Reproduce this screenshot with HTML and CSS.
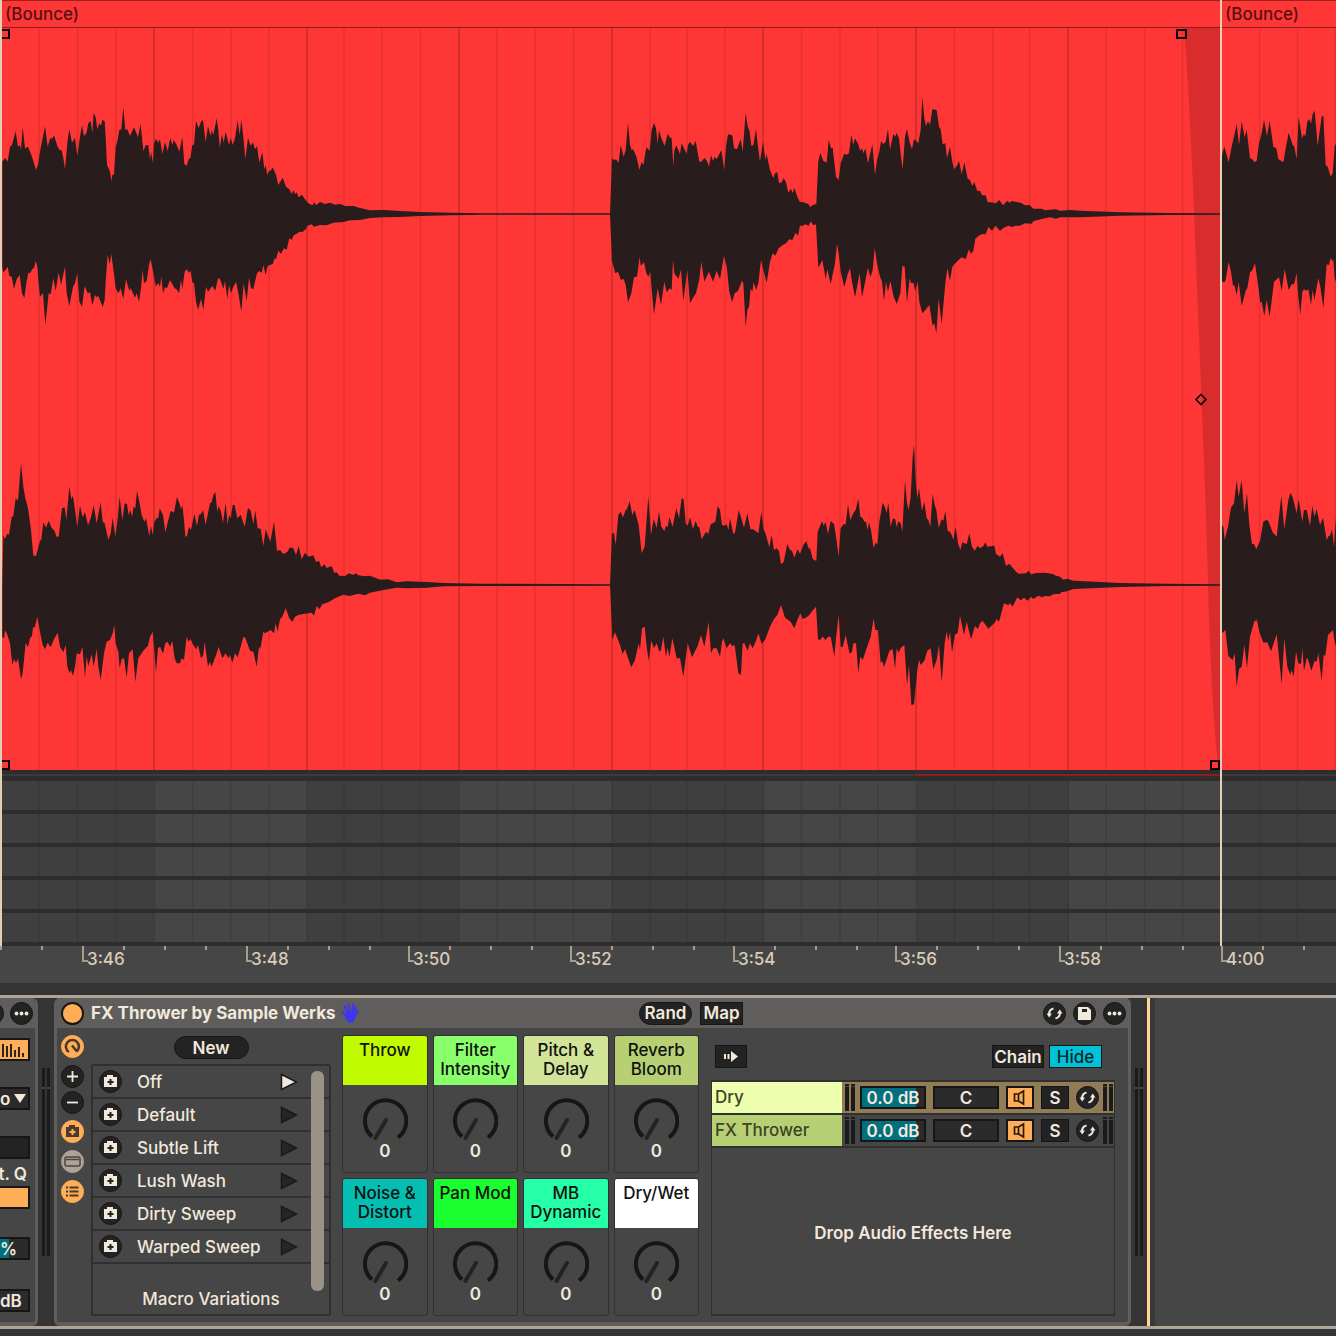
FILE: index.html
```html
<!DOCTYPE html>
<html lang="en">
<head>
<meta charset="utf-8">
<meta name="viewport" content="width=device-width, initial-scale=1">
<title>Arrangement – FX Thrower</title>
<link rel="stylesheet" href="styles.css">
</head>
<body>
<svg class="defs" width="0" height="0" aria-hidden="true">
  <defs>
    <symbol id="i-camera" viewBox="0 0 23 23"><path fill="currentColor" d="M5 7h3V5h6v2h4v10H5z"/><path class="cut" d="M11.500 9v6M8.500 12h6" stroke-width="2"/></symbol>
    <symbol id="i-swap" viewBox="0 0 23 23"><g fill="none" stroke="currentColor" stroke-width="2"><path d="M10.500 6.500Q6 7.500 6 12.500M12.500 16.500Q17 15.500 17 10.500"/></g><path fill="currentColor" d="M3.500 11.500h5.500l-2.800 4zM14 11.500h5.500l-2.800-4z"/></symbol>
    <symbol id="i-dots" viewBox="0 0 23 23"><g fill="currentColor"><circle cx="6.500" cy="11.500" r="1.900"/><circle cx="11.500" cy="11.500" r="1.900"/><circle cx="16.500" cy="11.500" r="1.900"/></g></symbol>
    <symbol id="i-play" viewBox="0 0 18 18"><path d="M1.500 1.500L16.500 9L1.500 16.500z" stroke="#191919" stroke-width="1.500" fill="currentColor"/></symbol>
    <symbol id="i-speaker" viewBox="0 0 24 19"><path d="M6.500 6h4v7h-4zM10.500 6l5-3v13l-5-3" fill="none" stroke="#2a1a08" stroke-width="1.700"/></symbol>
    <symbol id="i-knob" viewBox="0 0 46 44"><path d="M10 39.500A20.700 20.700 0 1 1 36 40.500" fill="none" stroke="#161616" stroke-width="4"/><path d="M24 23L13.500 41" stroke="#232323" stroke-width="4" stroke-linecap="round"/></symbol>
  </defs>
</svg>

<main class="arrangement">
  <header class="clip-heads">
    <span class="clip-head">(Bounce)</span>
    <span class="clip-head">(Bounce)</span>
  </header>
  <svg class="lane" viewBox="0 0 1336 742" preserveAspectRatio="none" role="img" aria-label="Audio waveform">
    <path class="grid-line" d="M39 0V742M77.500 0V742M116 0V742M192.500 0V742M231 0V742M269 0V742M344 0V742M382 0V742M420.500 0V742M497 0V742M535 0V742M573.500 0V742M650 0V742M687 0V742M725 0V742M801.500 0V742M840 0V742M878 0V742M954.500 0V742M993 0V742M1029.500 0V742M1106 0V742M1144.500 0V742M1182.500 0V742M1259.500 0V742M1297.500 0V742M1335 0V742"/>
    <path class="bar-line" d="M154 0V742M307 0V742M459 0V742M612 0V742M763 0V742M916 0V742M1068 0V742"/>
    <path fill="rgba(0,0,0,.15)" d="M1184 0Q1189 60 1194 185T1203 410T1208 557T1212 660T1219 742H1221V0z"/>
    <g class="wave">
      <svg x="0" y="52" width="640" height="330" viewBox="0 0 1920 990"><path d="M7,402 7,245 16,234 23,245 30,200 36,195 47,154 54,200 60,195 63,210 68,141 75,205 84,200 92,220 100,243 108,270 114,255 120,215 135,139 143,200 151,174 157,176 162,166 172,198 179,211 185,210 190,235 195,268 203,180 208,148 216,188 225,174 232,228 240,170 246,136 252,168 259,160 265,130 272,123 277,160 281,98 287,112 292,148 298,130 303,137 307,119 314,124 317,170 321,255 330,275 334,303 338,283 342,285 347,200 352,185 358,150 364,148 370,82 376,150 382,148 390,168 402,142 414,172 422,132 430,213 437,196 445,195 450,240 453,215 459,250 462,190 468,176 474,188 480,178 487,222 495,186 503,213 511,174 517,195 521,180 530,195 538,215 547,170 553,253 560,257 566,238 571,234 577,195 582,194 588,122 596,145 603,125 609,120 617,187 624,138 632,168 635,150 640,165 650,115 655,150 659,203 666,163 671,188 677,155 687,195 692,174 698,195 705,175 713,121 719,165 724,119 730,170 736,238 744,174 752,197 759,187 765,208 771,198 778,248 787,216 793,268 797,256 802,285 807,273 812,272 818,262 828,284 835,315 848,293 858,320 868,328 875,342 880,330 885,343 890,337 896,352 906,344 915,358 925,370 937,376 943,367 948,376 960,366 975,372 990,368 1005,374 1020,372 1035,378 1060,378 1080,384 1110,391 1150,390 1200,393 1260,396 1350,398 1450,400 1830,400 1830,404 1450,404 1350,406 1260,408 1200,411 1150,412 1110,414 1080,420 1050,421 1030,426 1000,428 980,436 960,435 942,440 935,433 922,437 918,446 908,456 900,455 888,462 880,467 876,479 868,475 860,509 852,505 843,522 835,512 828,538 824,535 818,553 808,555 802,560 797,585 790,555 785,578 778,573 771,580 760,627 753,625 747,593 740,663 731,610 724,695 715,640 708,605 700,620 693,640 687,615 682,657 675,603 670,627 660,597 654,595 646,632 637,618 624,635 618,620 610,690 603,657 594,690 588,665 582,610 577,607 572,572 567,578 560,568 554,575 547,627 543,600 537,640 530,628 524,625 510,600 501,625 495,622 489,640 484,590 480,620 474,608 468,620 462,590 452,537 447,555 440,603 432,610 428,570 423,625 417,665 410,640 405,653 392,625 388,632 378,598 370,657 362,625 355,640 347,625 343,590 334,522 329,553 323,525 318,590 314,660 308,681 295,648 290,652 285,645 277,676 270,637 263,640 254,618 246,680 238,665 232,580 225,610 219,620 208,678 200,640 195,560 183,615 176,577 167,633 160,595 152,643 146,640 136,735 129,640 120,650 115,600 112,560 107,542 103,562 97,568 90,580 85,578 79,610 73,654 66,640 59,585 50,598 42,627 35,590 28,588 23,560 10,578 7,560Z"/></svg>
      <svg x="600" y="52" width="640" height="330" viewBox="0 0 1920 990"><path d="M30,402 36,235 42,240 48,238 56,248 62,195 71,230 77,210 84,128 90,195 95,210 99,207 110,232 118,270 125,246 130,255 139,202 149,212 155,150 162,129 168,145 173,190 177,150 184,175 194,198 203,161 209,172 215,175 220,258 223,210 229,196 240,222 245,190 260,222 264,195 270,185 279,198 287,183 298,245 304,245 314,233 322,245 327,260 333,225 339,243 344,230 350,238 364,210 373,270 378,200 384,163 397,166 402,205 411,208 422,177 428,215 437,98 443,140 448,150 454,198 460,196 468,148 474,200 480,245 489,185 496,240 500,223 510,270 520,295 525,280 532,277 537,310 545,307 551,295 558,307 565,338 573,326 578,340 583,323 592,350 600,367 608,366 618,370 625,372 631,381 640,374 649,372 655,242 661,219 670,243 680,248 686,179 693,205 698,203 708,290 716,300 722,250 733,220 738,225 747,220 754,164 760,195 765,175 775,193 780,212 786,205 790,220 796,205 804,250 817,193 825,285 831,240 838,215 843,184 850,192 857,185 864,147 870,210 880,162 886,170 890,158 897,175 903,230 908,268 915,170 921,147 929,188 936,207 942,177 955,190 962,150 967,50 973,115 978,138 984,123 990,135 997,88 1010,90 1017,140 1022,148 1028,193 1036,190 1041,235 1050,200 1056,240 1062,268 1070,258 1077,243 1085,282 1093,247 1103,296 1110,300 1117,318 1123,306 1132,333 1140,332 1146,346 1157,346 1163,367 1175,367 1187,370 1198,360 1209,376 1222,362 1228,368 1236,363 1250,366 1262,368 1275,376 1288,375 1300,386 1325,386 1335,391 1350,389 1368,388 1380,392 1410,390 1440,392 1560,397 1700,399 1860,400 1860,404 1700,405 1560,407 1440,412 1380,412 1368,416 1350,412 1325,417 1300,424 1295,431 1275,430 1260,437 1245,437 1236,441 1225,437 1210,444 1200,453 1187,437 1176,452 1165,441 1157,463 1146,462 1135,468 1126,476 1120,512 1113,522 1107,508 1097,537 1085,532 1075,541 1063,553 1057,560 1050,602 1042,565 1036,610 1025,733 1016,655 1009,760 1003,730 998,738 992,700 988,675 976,690 967,700 958,665 953,605 946,633 940,608 933,610 929,595 921,667 914,560 907,558 901,640 890,672 881,650 871,603 864,635 858,607 852,662 846,605 840,590 832,555 824,505 818,570 811,592 804,563 796,602 786,652 779,580 765,652 755,600 750,565 743,583 733,621 722,575 716,520 711,492 705,550 692,612 682,568 677,597 667,540 655,563 648,433 640,436 632,424 626,437 616,433 608,437 600,437 594,467 587,458 577,480 568,478 558,490 545,497 536,505 526,527 518,520 510,545 500,608 490,570 483,540 475,610 468,630 461,607 457,635 452,625 447,680 442,690 437,740 430,610 426,602 414,633 404,640 396,667 388,635 380,560 372,528 360,598 350,572 339,605 327,575 313,605 304,545 298,597 288,640 280,652 270,670 262,570 250,662 243,570 235,597 223,580 219,540 215,630 209,625 200,637 193,605 183,675 173,625 162,703 156,640 151,575 145,590 139,580 132,547 122,557 119,530 111,590 102,592 94,640 84,667 77,615 71,597 63,600 54,575 46,580 36,543Z"/></svg>
      <svg x="0" y="412" width="640" height="330" viewBox="0 0 1920 990"><path d="M7,434 10,286 15,297 21,282 27,284 35,232 40,228 47,174 54,182 58,130 63,70 70,140 76,175 84,205 93,270 100,347 108,348 120,303 124,298 130,247 138,263 146,242 155,263 163,272 170,290 176,290 186,205 194,202 199,240 208,139 214,178 219,167 225,210 232,262 240,197 248,232 255,216 264,256 272,235 281,196 290,250 302,186 308,245 314,250 325,300 332,280 338,233 346,290 352,245 359,170 367,240 374,190 381,192 386,225 391,210 396,230 401,200 406,205 411,152 417,180 425,225 433,245 438,235 448,288 453,258 458,285 463,245 470,235 475,234 479,205 489,225 496,277 505,240 512,213 518,215 522,218 531,170 539,192 543,208 547,195 552,240 556,290 561,288 567,260 573,270 583,222 591,258 597,224 603,222 609,210 617,254 630,190 635,187 640,165 646,156 652,215 656,198 663,215 669,250 677,188 683,255 687,225 692,235 698,195 704,195 712,235 722,224 734,260 744,203 752,212 760,252 766,212 773,265 782,266 790,318 797,268 803,285 811,305 822,245 831,332 840,330 850,342 862,336 870,322 880,325 888,345 896,318 905,358 915,338 926,350 940,346 948,366 957,362 964,382 973,373 980,384 995,378 1003,398 1010,397 1018,407 1035,408 1047,400 1060,405 1067,400 1075,406 1095,409 1110,407 1125,413 1142,419 1165,418 1190,427 1220,424 1280,426 1330,429 1440,431 1830,433 1830,437 1440,438 1330,439 1280,443 1220,445 1190,443 1150,450 1110,458 1095,466 1075,461 1048,468 1030,464 1005,475 985,487 967,493 958,508 950,498 942,527 935,518 910,522 895,525 885,530 877,546 868,535 857,505 847,530 840,538 833,575 827,550 822,580 812,570 795,580 790,575 781,627 777,620 770,680 760,635 750,632 735,592 730,592 722,620 713,652 705,640 697,668 690,645 685,655 677,640 667,655 656,620 650,640 635,680 630,665 624,680 614,605 610,645 603,655 594,615 588,628 577,610 572,597 566,605 560,590 552,660 545,655 540,670 530,670 524,655 517,603 510,620 503,605 496,610 489,641 480,620 474,625 468,697 462,620 458,575 450,590 444,617 430,632 415,655 406,725 398,628 387,640 380,713 372,655 365,657 359,685 355,635 347,610 343,555 338,580 330,600 320,605 312,640 302,720 295,680 290,627 281,680 275,643 265,678 260,650 255,712 247,620 240,643 230,640 225,680 219,708 213,690 209,700 202,680 197,615 190,637 180,620 173,578 162,598 152,622 143,608 135,628 128,615 120,575 112,530 104,563 99,562 96,588 90,595 84,622 77,608 68,700 63,717 54,655 48,670 43,657 37,675 30,610 20,578 15,572 12,595 7,590Z"/></svg>
      <svg x="600" y="402" width="640" height="330" viewBox="0 0 1920 990"><path d="M30,464 36,312 42,308 47,345 55,255 62,245 69,262 77,240 81,237 89,213 97,255 104,240 116,285 125,370 134,350 139,280 145,198 153,315 161,267 170,293 177,245 184,290 193,303 198,287 203,292 208,261 218,290 229,234 237,265 245,205 251,208 257,280 263,287 270,262 279,298 287,272 293,290 298,292 305,328 318,305 325,312 332,283 346,275 353,228 360,240 366,285 373,287 380,283 385,300 390,265 400,312 405,308 416,241 423,262 432,293 442,250 451,298 460,298 475,310 484,247 491,298 497,312 508,352 515,314 522,360 530,355 537,363 543,403 551,396 562,342 570,360 576,362 583,383 593,357 600,372 610,345 619,333 626,356 630,354 638,387 649,393 653,305 666,274 671,287 677,275 684,313 692,273 702,282 708,320 716,380 722,295 730,283 737,283 744,223 751,270 760,250 767,240 775,206 781,260 787,263 793,275 798,275 803,300 807,277 813,300 821,355 827,337 832,345 838,275 848,218 855,232 860,248 865,218 872,290 879,265 886,268 890,292 895,274 902,280 907,305 915,152 921,220 926,240 932,200 938,80 942,46 947,150 952,205 957,175 966,243 973,215 980,265 985,270 991,290 998,191 1004,225 1009,240 1016,293 1025,268 1030,272 1036,243 1043,303 1050,305 1055,315 1060,330 1067,290 1074,340 1081,360 1087,337 1100,343 1108,310 1116,350 1124,362 1133,347 1140,355 1150,348 1156,337 1162,350 1183,347 1188,372 1200,380 1208,370 1218,408 1228,401 1248,425 1256,431 1278,430 1286,422 1293,433 1310,429 1335,428 1358,432 1368,437 1380,440 1390,449 1402,446 1420,452 1440,453 1560,459 1700,461 1860,463 1860,467 1700,468 1560,471 1440,476 1420,477 1405,482 1395,485 1385,486 1380,491 1360,493 1350,499 1335,498 1326,502 1315,497 1300,507 1293,500 1283,512 1272,503 1262,511 1252,502 1238,530 1230,520 1225,526 1212,520 1197,575 1190,567 1184,578 1165,596 1157,585 1148,573 1140,580 1134,597 1125,588 1113,628 1100,575 1092,615 1080,557 1073,610 1065,613 1056,668 1050,605 1045,633 1040,605 1034,640 1025,757 1017,645 1010,690 1000,718 992,655 982,662 973,692 962,705 957,690 952,720 942,823 934,825 927,705 921,765 913,645 903,653 895,668 890,655 885,717 878,657 868,663 852,712 847,693 842,698 834,600 826,600 821,565 812,620 800,655 788,690 781,680 775,730 768,640 760,640 756,665 749,672 737,615 728,652 722,650 716,555 708,625 703,680 692,620 684,620 677,630 668,620 660,630 654,628 648,530 635,545 628,555 620,562 608,567 601,550 592,570 583,595 572,575 555,563 543,525 532,555 522,567 510,590 495,630 485,642 475,610 467,635 458,655 450,640 443,662 433,640 428,640 423,735 415,730 404,645 397,648 390,640 380,655 370,625 366,635 360,680 350,655 340,655 333,670 326,577 313,650 303,615 293,648 276,682 263,640 250,740 240,685 230,685 217,625 208,682 203,652 198,680 190,620 183,660 178,665 170,640 162,655 154,632 146,693 140,650 134,590 126,595 120,660 116,640 105,690 94,712 86,690 75,657 68,673 60,645 45,607 37,630Z"/></svg>
      <svg x="1140" y="-28" width="200" height="400" viewBox="0 0 600 1200"><path d="M246,642 246,465 253,440 261,468 266,487 275,440 283,405 290,372 297,435 305,364 314,412 320,390 330,475 336,477 344,487 350,482 357,430 365,400 372,360 381,408 389,362 400,440 409,445 415,477 430,487 438,440 446,398 455,425 459,438 462,436 470,478 476,350 486,415 492,402 496,410 502,365 508,357 513,372 518,342 524,332 533,438 545,350 550,347 557,495 563,500 572,530 578,520 584,440 588,430 588,845 584,835 580,780 576,782 572,773 567,795 560,793 550,925 541,860 535,835 523,900 518,870 513,915 505,868 498,872 492,868 487,875 481,945 475,890 470,820 462,853 455,853 446,870 434,808 425,873 417,832 402,845 389,950 380,900 373,948 365,905 361,908 355,860 345,790 336,812 330,817 322,865 318,870 305,918 296,845 290,885 283,855 279,857 273,815 266,785 257,840 253,847 246,845Z"/></svg>
      <svg x="1140" y="412" width="200" height="330" viewBox="0 0 600 990"><path d="M246,434 246,256 250,260 254,300 264,260 273,203 282,190 290,121 296,170 305,120 313,220 321,160 328,255 336,312 342,312 349,328 360,303 370,245 378,240 385,243 398,277 410,290 424,168 433,268 445,180 451,158 458,172 470,220 476,178 487,245 492,210 500,210 510,258 517,198 524,230 530,207 540,255 549,233 560,300 566,288 570,287 576,268 582,320 588,230 588,620 583,600 579,570 564,585 556,647 551,645 545,722 535,640 530,665 524,662 514,692 503,655 500,655 492,692 487,625 483,672 475,670 468,635 461,710 455,690 451,705 442,680 433,595 425,732 410,583 393,634 382,607 370,608 358,575 350,537 348,545 344,540 330,590 321,683 313,615 305,680 297,687 290,742 284,640 278,660 265,648 256,570 246,580Z"/></svg>
    </g>
    <g class="handle">
      <path d="M-1 2H9V10H-1zM1177 2h9v8h-9zM-1 733H9V741H-1zM1211 733h8v8h-8z"/>
      <path stroke-width="1.700" d="M1201 366.500l5 5l-5 5l-5-5z"/>
    </g>
  </svg>
  <div class="lane-edge"><i class="loop-mark"></i></div>
  <div class="tracks">
    <svg class="tracks-grid" viewBox="0 0 1336 165" preserveAspectRatio="none" aria-hidden="true"><path class="grid-line" d="M39 0V165M77.500 0V165M116 0V165M154.500 0V165M192.500 0V165M231 0V165M269 0V165M307 0V165M344 0V165M382 0V165M420.500 0V165M459 0V165M497 0V165M535 0V165M573.500 0V165M612 0V165M650 0V165M687 0V165M725 0V165M763.500 0V165M801.500 0V165M840 0V165M878 0V165M916.500 0V165M954.500 0V165M993 0V165M1029.500 0V165M1068 0V165M1106 0V165M1144.500 0V165M1182.500 0V165M1259.500 0V165M1297.500 0V165"/></svg>
    <div class="track"></div><div class="track"></div><div class="track"></div><div class="track"></div><div class="track"></div>
  </div>
  <i class="locator locator-start"></i>
  <i class="locator locator-end"></i>
</main>

<div class="ruler">
  <span class="tick"></span><span class="tick major">3:46</span><span class="tick major">3:48</span><span class="tick major">3:50</span><span class="tick major">3:52</span><span class="tick major">3:54</span><span class="tick major">3:56</span><span class="tick major">3:58</span><span class="tick major">4:00</span>
</div>

<section class="devices" aria-label="Device view">
  <div class="device device-cut">
    <div class="title-bar">
      <button class="round" aria-label="Save"></button>
      <button class="round" aria-label="More"><svg><use href="#i-dots"/></svg></button>
    </div>
    <div class="cut-body">
      <button class="field amber" aria-label="Analyzer"><svg class="histogram" viewBox="0 0 26 18"><path d="M-1 5v11M3 3v13M7 5v11M11 3v13M15 9v7M19 6v10M23 12v4" stroke="#2a2420" stroke-width="2"/></svg></button>
      <div class="field menu"><select aria-label="Mode"><option>o</option></select><svg width="12" height="9"><path d="M0 0h12L6 9z" fill="#f2e8dc"/></svg></div>
      <input class="field blank" aria-label="Value">
      <label class="cut-label" for="q">t. Q</label>
      <button class="field amber adapt" id="q"></button>
      <input class="field percent" aria-label="Scale" value="%">
      <input class="field gain" aria-label="Gain" value="dB">
    </div>
  </div>

  <div class="meter-gap"><i class="meter"></i><i class="meter"></i></div>

  <div class="device rack">
    <div class="title-bar">
      <button class="round power" aria-label="Device on"></button>
      <h1 class="title">FX Thrower by Sample Werks
        <svg class="hand" viewBox="0 0 18 20" aria-hidden="true"><g stroke="#3f35f0" stroke-width="2.200" stroke-linecap="round" fill="none"><path d="M7 11L3.500 3M8.500 10L7.500 1.500M11 10L12 1.500M13 11L14.500 4M14 13L16.500 8M6 14L1.500 9"/></g><path d="M5 9.500L14.500 9.500L14.500 15L12 19.500H7L4.500 15z" fill="#3f35f0"/></svg>
      </h1>
      <button class="pill">Rand</button>
      <button class="key">Map</button>
      <div class="title-tools">
        <button class="round" aria-label="Hot-swap"><svg><use href="#i-swap"/></svg></button>
        <button class="round" aria-label="Save preset"><svg viewBox="0 0 23 23"><path d="M5 5h10l3 3v10H5z" fill="currentColor"/><path d="M9 7h5v3H9z" fill="#232323"/></svg></button>
        <button class="round" aria-label="More"><svg><use href="#i-dots"/></svg></button>
      </div>
    </div>
    <div class="rack-body">
      <div class="rail">
        <button class="round on" aria-label="Macros"><svg viewBox="0 0 23 23"><path d="M8 17A6.500 6.500 0 1 1 15.500 16.500M11 10.500L16 16.500" fill="none" stroke="currentColor" stroke-width="2.600"/></svg></button>
        <button class="round" aria-label="Add macro"><svg viewBox="0 0 23 23"><path d="M11.500 6v11M6 11.500h11" stroke="currentColor" stroke-width="1.800"/></svg></button>
        <button class="round" aria-label="Remove macro"><svg viewBox="0 0 23 23"><path d="M6 11.500h11" stroke="currentColor" stroke-width="1.800"/></svg></button>
        <button class="round on" aria-label="Variations"><svg><use href="#i-camera"/></svg></button>
        <button class="round off" aria-label="Devices"><svg viewBox="0 0 23 23"><rect x="4" y="7" width="15" height="9" rx="1.500" fill="none" stroke="currentColor" stroke-width="1.500"/><path d="M5 9.500h13" stroke="currentColor" stroke-width="1.500"/></svg></button>
        <button class="round on" aria-label="Chain list"><svg viewBox="0 0 23 23"><path d="M5 7.500h2M8.500 7.500h9M5 11.500h2M8.500 11.500h9M5 15.500h2M8.500 15.500h9" stroke="currentColor" stroke-width="1.800"/></svg></button>
      </div>

      <div class="variations">
        <button class="pill new">New</button>
        <div class="variation-box">
          <ul class="variation-list">
            <li><button class="round" aria-label="Store"><svg><use href="#i-camera"/></svg></button><span>Off</span><button class="launch active" aria-label="Launch"><svg><use href="#i-play"/></svg></button></li>
            <li><button class="round" aria-label="Store"><svg><use href="#i-camera"/></svg></button><span>Default</span><button class="launch" aria-label="Launch"><svg><use href="#i-play"/></svg></button></li>
            <li><button class="round" aria-label="Store"><svg><use href="#i-camera"/></svg></button><span>Subtle Lift</span><button class="launch" aria-label="Launch"><svg><use href="#i-play"/></svg></button></li>
            <li><button class="round" aria-label="Store"><svg><use href="#i-camera"/></svg></button><span>Lush Wash</span><button class="launch" aria-label="Launch"><svg><use href="#i-play"/></svg></button></li>
            <li><button class="round" aria-label="Store"><svg><use href="#i-camera"/></svg></button><span>Dirty Sweep</span><button class="launch" aria-label="Launch"><svg><use href="#i-play"/></svg></button></li>
            <li><button class="round" aria-label="Store"><svg><use href="#i-camera"/></svg></button><span>Warped Sweep</span><button class="launch" aria-label="Launch"><svg><use href="#i-play"/></svg></button></li>
          </ul>
          <i class="scroll-thumb"></i>
          <p class="caption">Macro Variations</p>
        </div>
      </div>

      <div class="macros">
        <label class="macro"><span class="macro-name lime">Throw</span><svg><use href="#i-knob"/></svg><output>0</output><input type="range" value="0"></label>
        <label class="macro"><span class="macro-name green">Filter Intensity</span><svg><use href="#i-knob"/></svg><output>0</output><input type="range" value="0"></label>
        <label class="macro"><span class="macro-name straw">Pitch &amp; Delay</span><svg><use href="#i-knob"/></svg><output>0</output><input type="range" value="0"></label>
        <label class="macro"><span class="macro-name olive">Reverb Bloom</span><svg><use href="#i-knob"/></svg><output>0</output><input type="range" value="0"></label>
        <label class="macro"><span class="macro-name teal">Noise &amp; Distort</span><svg><use href="#i-knob"/></svg><output>0</output><input type="range" value="0"></label>
        <label class="macro"><span class="macro-name vivid">Pan Mod</span><svg><use href="#i-knob"/></svg><output>0</output><input type="range" value="0"></label>
        <label class="macro"><span class="macro-name mint">MB Dynamic</span><svg><use href="#i-knob"/></svg><output>0</output><input type="range" value="0"></label>
        <label class="macro"><span class="macro-name white">Dry/Wet</span><svg><use href="#i-knob"/></svg><output>0</output><input type="range" value="0"></label>
      </div>

      <div class="chains">
        <div class="chain-tools">
          <button class="key auto" aria-label="Auto select"><svg viewBox="0 0 14 11"><path d="M0 3h2v5H0zM3.500 3h2v5h-2zM7 0l7 5.500L7 11z" fill="currentColor"/></svg></button>
          <button class="key chain">Chain</button>
          <button class="key hide">Hide</button>
        </div>
        <div class="chain-list">
          <div class="chain-row selected">
            <span class="chain-name pale">Dry</span>
            <span class="meters"><i></i><i></i></span>
            <input class="box volume" aria-label="Dry volume" value="0.0 dB">
            <input class="box" aria-label="Dry pan" value="C">
            <button class="mini speaker" aria-label="Activator"><svg><use href="#i-speaker"/></svg></button>
            <button class="mini">S</button>
            <button class="round" aria-label="Hot-swap"><svg><use href="#i-swap"/></svg></button>
            <span class="meters"><i></i><i></i></span>
          </div>
          <div class="chain-row">
            <span class="chain-name leaf">FX Thrower</span>
            <span class="meters"><i></i><i></i></span>
            <input class="box volume" aria-label="FX Thrower volume" value="0.0 dB">
            <input class="box" aria-label="FX Thrower pan" value="C">
            <button class="mini speaker" aria-label="Activator"><svg><use href="#i-speaker"/></svg></button>
            <button class="mini">S</button>
            <button class="round" aria-label="Hot-swap"><svg><use href="#i-swap"/></svg></button>
            <span class="meters"><i></i><i></i></span>
          </div>
          <p class="drop">Drop Audio Effects Here</p>
        </div>
      </div>
    </div>
  </div>

  <div class="meter-gap"><i class="meter"></i><i class="meter"></i></div>
  <div class="device-end"></div>
</section>
</body>
</html>
```
FILE: styles.css
```css
* { box-sizing: border-box; }
body {
  margin: 0;
  min-height: 100vh;
  overflow-x: hidden;
  background: #343434;
  color: #f2e8dc;
  font: 600 17px/20px Inter, "Liberation Sans", sans-serif;
}
button, input, select { font: inherit; color: inherit; border: 0; border-radius: 0; padding: 0; margin: 0; background: none; }
i { display: block; }
.defs { position: absolute; }

/* Arrangement */
.arrangement { position: relative; overflow: hidden; }
.clip-heads { display: grid; grid-template-columns: 1220fr 116fr; }
.clip-head {
  height: 28px;
  padding-left: 5px;
  background: #ff3636;
  border-top: 1px solid #9a2222;
  border-bottom: 1px solid #8a1f1f;
  color: #541212;
  line-height: 26px;
  font-weight: 500;
}
.lane { display: block; width: 100%; height: 742px; background: #ff3636; }
.grid-line { fill: none; stroke: #000; stroke-opacity: .1; stroke-width: 1.5px; }
.bar-line { fill: none; stroke: #000; stroke-opacity: .16; stroke-width: 2px; }
.wave { fill: #281d1c; }
.handle { fill: none; stroke: #0c0000; stroke-width: 2px; }
.lane-edge {
  display: flex;
  justify-content: flex-end;
  height: 11px;
  padding: 4px 8.6% 0 0;
  background: linear-gradient(#2d2d2d 4px, #3a3a3a 4px 6px, #2d2d2d 6px);
}
.loop-mark { width: 25%; height: 2px; background: #8f1c20; }
.tracks {
  position: relative;
  background: repeating-linear-gradient(to right, #3f3f3f 0 152px, #464646 152px 305px) 2px 0;
}
.tracks-grid { position: absolute; left: 0; top: 0; width: 100%; height: 100%; }
.track { position: relative; height: 33px; border-bottom: 4px solid #2d2d2d; }
.locator { position: absolute; top: 0; bottom: 0; width: 2px; background: #e3d0b4; }
.locator-start { left: 0; }
.locator-end { left: calc(100% * 1220 / 1336); }

.ruler {
  display: grid;
  grid-template-columns: 82fr 164fr 162fr 162fr 163fr 162fr 164fr 162fr 115fr;
  height: 37px;
  background: #464646;
  color: #d9ccb9;
  font-weight: 500;
}
.tick {
  position: relative;
  padding: 3px 0 0 5px;
  white-space: nowrap;
  background: linear-gradient(to right, #a89c8d 2px, transparent 2px) 0 0 / 41px 4px repeat-x;
}
.major::before {
  content: "";
  position: absolute;
  left: 0;
  top: 0;
  width: 4px;
  height: 14px;
  border: solid #a89c8d;
  border-width: 0 0 2px 2px;
}

/* Device view */
.devices {
  display: flex;
  height: 334px;
  margin-top: 12px;
  border: solid #b0a499;
  border-width: 3px 0;
}
.device { display: flex; flex-direction: column; flex: none; background: #464646; border: solid #605e5c; border-width: 0 3px 4px; border-radius: 6px; }
.title-bar { display: flex; align-items: center; flex: none; height: 30px; background: #605e5c; }
.round {
  display: block;
  flex: none;
  width: 23px;
  height: 23px;
  border-radius: 50%;
  background: #232323;
  border: 1px solid #161616;
}
.round svg { display: block; width: 23px; height: 23px; margin: -1px; }
.cut { stroke: var(--cut, #232323); }
.on { --cut: #ffad56; background: #ffad56; border-color: #ffad56; color: #4b3a2b; }
.off { background: #aea296; border-color: #aea296; color: #464646; }

.device-cut { width: 38px; border-left: 0; border-top-left-radius: 0; border-bottom-left-radius: 0; overflow: hidden; }
.device-cut .title-bar { justify-content: flex-end; gap: 6px; padding-right: 2px; }
.cut-body { display: flex; flex-direction: column; align-items: flex-end; padding: 10px 5px 0 0; }
.field { flex: none; width: 32px; height: 23px; margin-bottom: 26px; background: #232323; border: 2px solid #161616; }
.amber { background: #ffad56; }
.histogram { display: block; width: 26px; height: 18px; }
.menu { display: flex; align-items: center; gap: 2px; background: #2b2b2b; }
.menu select { width: 12px; appearance: none; }
.menu svg { flex: none; }
.blank { margin-bottom: 0; }
.cut-label { line-height: 27px; padding: 2px 3px 0 0; height: 27px; white-space: nowrap; }
.adapt { margin-bottom: 28px; }
.percent { background: linear-gradient(to right, #00707e 9px, #2b2b2b 9px); margin-bottom: 29px; }
.gain { background: #2b2b2b; }

.meter-gap { display: flex; flex: none; gap: 2px; width: 16px; padding: 70px 4px 0; }
.meter { width: 3px; height: 188px; background: linear-gradient(#1b1b1b 19px, #444 19px 21px, #1b1b1b 21px); }
.device-end { flex: 1; background: #464646; border-left: 3px solid #ffd796; box-shadow: inset 5px 0 #393939; }

.rack { width: 1077px; }
.rack .title-bar { padding: 0 2px 0 4px; }
.power { background: #ffad56; border-width: 2px; }
.title { display: flex; align-items: center; gap: 5px; width: 548px; margin: 0 0 0 7px; font: inherit; font-weight: 700; white-space: nowrap; }
.hand { width: 18px; height: 20px; }
.pill { height: 23px; border-radius: 12px; background: #232323; border: 1px solid #161616; }
.title-bar .pill { width: 53px; margin-right: 8px; }
.key { height: 23px; background: #232323; border: 1px solid #161616; }
.title-bar .key { width: 43px; }
.title-tools { display: flex; gap: 7px; margin-left: auto; }

.rack-body { display: flex; flex: 1; padding: 0 13px 6px 4px; }
.rail { display: flex; flex-direction: column; gap: 7px; width: 30px; padding-top: 7px; }
.rail .round:nth-child(2) { margin-bottom: -4px; }
.rail .round:nth-child(3) { margin-bottom: -1px; }

.variations { display: flex; flex-direction: column; width: 240px; padding-top: 8px; }
.new { align-self: center; width: 75px; }
.variation-box { position: relative; flex: 1; margin-top: 5px; border: 2px solid #303030; border-radius: 3px; }
.variation-list { margin: 0; padding: 0; list-style: none; }
.variation-list li { display: flex; align-items: center; height: 33px; padding: 0 31px 0 6px; border-bottom: 2px solid #303030; }
.variation-list span { flex: 1; margin-left: 15px; font-weight: 500; white-space: nowrap; }
.launch { width: 18px; height: 18px; color: #262626; }
.launch svg { display: block; width: 18px; height: 18px; }
.launch.active { color: #f2e8dc; }
.scroll-thumb { position: absolute; right: 5px; top: 5px; width: 13px; height: 220px; border-radius: 6px; background: #9a9187; }
.caption { margin: 25px 0 0; text-align: center; font-weight: 500; }

.macros { display: grid; grid-template-columns: repeat(4, 1fr); grid-template-rows: repeat(2, 138px); gap: 5px; width: 357px; margin: 7px 12px 0 11px; }
.macro { position: relative; display: flex; flex-direction: column; align-items: center; border: 1px solid #303030; border-radius: 3px; overflow: hidden; }
.macro-name { align-self: stretch; height: 49px; margin-bottom: 12px; padding: 5px 1px 0; color: #111; line-height: 19px; font-weight: 500; text-align: center; }
.macro svg { width: 46px; height: 44px; flex: none; }
.macro output { line-height: 20px; }
.macro input { position: absolute; left: 0; top: 50px; width: 100%; height: 84px; opacity: 0; }
.lime { background: #c0fb00; }
.green { background: #8aff6c; }
.straw { background: #d2e498; }
.olive { background: #b8d074; }
.teal { background: #04bfb1; }
.vivid { background: #1aff2f; }
.mint { background: #25ffa8; }
.white { background: #fff; }

.chains { display: flex; flex-direction: column; flex: 1; }
.chain-tools { display: flex; align-items: center; padding: 17px 13px 0 4px; }
.auto { width: 32px; margin-right: auto; }
.auto svg { display: block; width: 14px; height: 11px; margin: 0 auto; }
.chain { width: 52px; }
.hide { width: 53px; margin-left: 5px; background: #00c1d6; color: #0f2a2e; font-weight: 500; }
.chain-list { display: flex; flex-direction: column; flex: 1; margin-top: 12px; border: 2px solid #303030; border-width: 2px 1px; }
.chain-row { display: flex; align-items: center; height: 33px; border-bottom: 2px solid #303030; }
.selected { background: #917c56; }
.chain-name { align-self: stretch; flex: 1; padding-left: 3px; line-height: 31px; font-weight: 500; color: #3c4428; }
.pale { background: #edffae; }
.leaf { background: #b8d074; }
.meters { display: flex; gap: 2px; margin: 0 3px; }
.meters:last-child { margin: 0 1px 0 2px; }
.meters i { width: 4px; height: 27px; background: linear-gradient(#1b1b1b 2px, #444 2px 3px, #1b1b1b 3px); }
.box { width: 66px; height: 23px; margin: 0 5px 0 2px; background: #2b2b2b; border: 2px solid #161616; text-align: center; }
.volume { background: linear-gradient(to right, #00707e 54px, #2b2b2b 54px); }
.mini { width: 28px; height: 23px; margin-left: 2px; margin-right: 5px; background: #232323; border: 1px solid #161616; }
.speaker { background: #ffad56; border-width: 2px; }
.speaker svg { display: block; width: 24px; height: 19px; }
.chain-row .round { margin: 0 2px; }
.drop { margin: auto; padding-top: 4px; }
```
